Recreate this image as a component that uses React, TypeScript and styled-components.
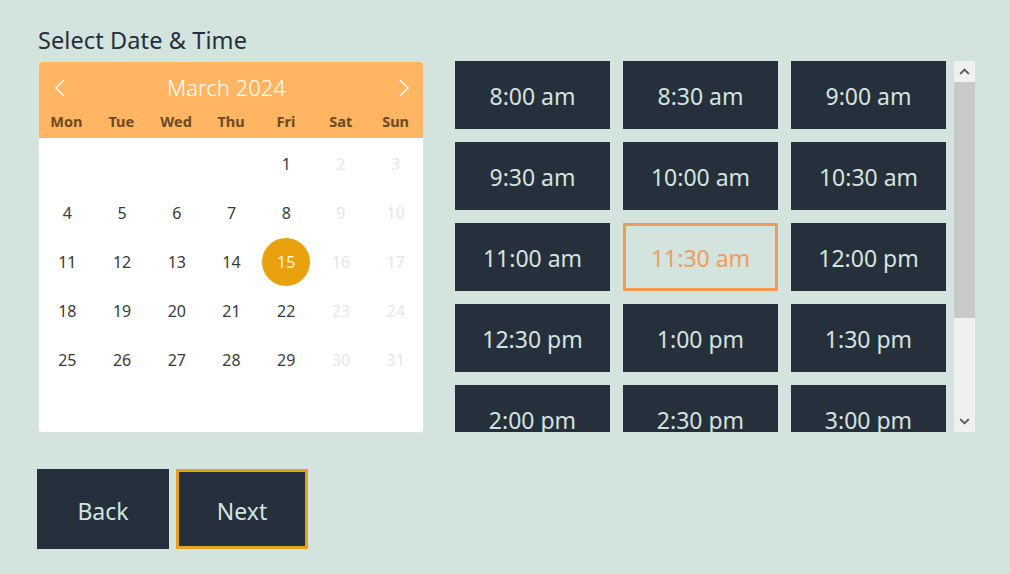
import styled, { createGlobalStyle } from "styled-components";
import { ChevronUp, ChevronDown } from "lucide-react";

const GlobalStyle = createGlobalStyle`
    html, body {
        margin: 0;
        padding: 0;
        background: #d3e4df;
    }
    * {
        box-sizing: border-box;
    }
`

const weekDays = ["Mon", "Tue", "Wed", "Thu", "Fri", "Sat", "Sun"];

// March 2024 starts on a Friday
const cells: (number | null)[] = [
    null, null, null, null, 1, 2, 3,
    4, 5, 6, 7, 8, 9, 10,
    11, 12, 13, 14, 15, 16, 17,
    18, 19, 20, 21, 22, 23, 24,
    25, 26, 27, 28, 29, 30, 31,
];

const slots = [
    "8:00 am", "8:30 am", "9:00 am",
    "9:30 am", "10:00 am", "10:30 am",
    "11:00 am", "11:30 am", "12:00 pm",
    "12:30 pm", "1:00 pm", "1:30 pm",
    "2:00 pm", "2:30 pm", "3:00 pm",
    "3:30 pm", "4:00 pm", "4:30 pm",
];

const Arrow = ({dir}: {dir: "left" | "right"}) => (
    <svg width="12" height="20" viewBox="0 0 12 20" fill="none">
        <polyline
            points={dir === "left" ? "10,2 2,10 10,18" : "2,2 10,10 2,18"}
            stroke="#ffffff" strokeWidth="1.4" strokeLinejoin="round" strokeLinecap="round"/>
    </svg>
);

export default function App() {
    return (
        <Page>
            <GlobalStyle/>
            <Title>Select Date &amp; Time</Title>
            <Main>
                <Calendar>
                    <CalHeader>
                        <MonthRow>
                            <NavButton><Arrow dir="left"/></NavButton>
                            <Month>March 2024</Month>
                            <NavButton $right><Arrow dir="right"/></NavButton>
                        </MonthRow>
                        <WeekRow>
                            {weekDays.map(d => <WeekDay key={d}>{d}</WeekDay>)}
                        </WeekRow>
                    </CalHeader>
                    <Days>
                        {cells.map((d, i) => (
                            <DayCell key={i}>
                                {d !== null && (
                                    <Day $disabled={i % 7 >= 5} $selected={d === 15}>{d}</Day>
                                )}
                            </DayCell>
                        ))}
                    </Days>
                </Calendar>

                <SlotsPanel>
                    <SlotsScroll>
                        <SlotGrid>
                            {slots.map(s => (
                                <Slot key={s} $active={s === "11:30 am"}>{s}</Slot>
                            ))}
                        </SlotGrid>
                    </SlotsScroll>
                    <ScrollBar>
                        <ScrollButton><ChevronUp size={15} strokeWidth={3.2}/></ScrollButton>
                        <Track>
                            <Thumb/>
                        </Track>
                        <ScrollButton><ChevronDown size={15} strokeWidth={3.2}/></ScrollButton>
                    </ScrollBar>
                </SlotsPanel>
            </Main>

            <Actions>
                <ActionButton>Back</ActionButton>
                <ActionButton $primary>Next</ActionButton>
            </Actions>
        </Page>
    );
}

const Page = styled.div`
    padding: 25px 0 0 37px;
    font-family: "Noto Sans", "Open Sans", sans-serif;
    width: 1010px;
    height: 574px;
`

const Title = styled.h1`
    margin: 0 0 6px 1px;
    font-size: 23.5px;
    line-height: 30px;
    font-weight: 400;
    color: #262f3c;
    letter-spacing: 0.1px;
`

const Main = styled.div`
    display: flex;
    align-items: flex-start;
    gap: 31px;
`

const Calendar = styled.div`
    width: 386px;
    height: 372px;
    margin-left: 1px;
    background: #ffffff;
    border: 1px solid #e2e2e2;
    border-radius: 4px;
    overflow: hidden;
`

const CalHeader = styled.div`
    background: #ffb562;
    height: 77px;
    margin: -1px -1px 0;
`

const MonthRow = styled.div`
    display: flex;
    align-items: center;
    justify-content: space-between;
    height: 51px;
    padding: 0 14px 0 16px;
`

const NavButton = styled.div<{$right?: boolean}>`
    display: flex;
    align-items: center;
    justify-content: ${p => p.$right ? "flex-end" : "flex-start"};
    width: 20px;
    padding-top: 2px;
`

const Month = styled.div`
    font-size: 22px;
    font-weight: 300;
    color: #ffffff;
    margin-right: 11px;
`

const WeekRow = styled.div`
    display: grid;
    grid-template-columns: repeat(7, 1fr);
    height: 26px;
    padding: 0 1px;
`

const WeekDay = styled.div`
    text-align: center;
    font-size: 14.5px;
    font-weight: 700;
    color: #6e4a22;
    line-height: 18px;
`

const Days = styled.div`
    display: grid;
    grid-template-columns: repeat(7, 1fr);
    grid-auto-rows: 49px;
    padding: 1px 0 0 1px;
`

const DayCell = styled.div`
    display: flex;
    align-items: center;
    justify-content: center;
`

const Day = styled.div<{$disabled?: boolean; $selected?: boolean}>`
    width: 48px;
    height: 48px;
    border-radius: 50%;
    display: flex;
    align-items: center;
    justify-content: center;
    font-size: 16px;
    padding-top: 1px;
    color: ${p => p.$selected ? "#fff5e0" : p.$disabled ? "#e6e6e6" : "#3a3a3a"};
    background: ${p => p.$selected ? "#e9a20d" : "transparent"};
`

const SlotsPanel = styled.div`
    display: flex;
    width: 520px;
    height: 371px;
`

const SlotsScroll = styled.div`
    flex: 1;
    overflow: hidden;
`

const SlotGrid = styled.div`
    display: grid;
    grid-template-columns: repeat(3, 155px);
    grid-auto-rows: 68px;
    column-gap: 13px;
    row-gap: 13px;
`

const Slot = styled.div<{$active?: boolean}>`
    display: flex;
    align-items: center;
    justify-content: center;
    padding-top: 2px;
    font-size: 23px;
    color: ${p => p.$active ? "#f19c57" : "#d3e4df"};
    background: ${p => p.$active ? "transparent" : "#262f3c"};
    border: ${p => p.$active ? "3px solid #f29b57" : "none"};
`

const ScrollBar = styled.div`
    width: 21px;
    display: flex;
    flex-direction: column;
    background: #f0f0f0;
`

const ScrollButton = styled.div`
    height: 21px;
    display: flex;
    align-items: center;
    justify-content: center;
    color: #5a5a5a;
`

const Track = styled.div`
    flex: 1;
`

const Thumb = styled.div`
    height: 236px;
    background: #c9c9c9;
`

const Actions = styled.div`
    display: flex;
    gap: 7px;
    margin-top: 36px;
`

const ActionButton = styled.button<{$primary?: boolean}>`
    width: 132px;
    height: 80px;
    background: #262f3c;
    color: #d3e4df;
    font-family: "Noto Sans", "Open Sans", sans-serif;
    font-size: 23px;
    border: ${p => p.$primary ? "3px solid #e6a21d" : "none"};
    padding: 3px 0 0;
    cursor: pointer;
`
